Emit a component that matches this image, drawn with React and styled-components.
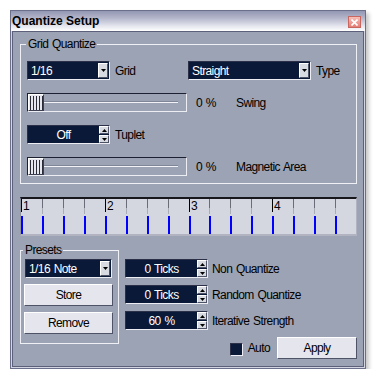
import React from 'react';
import styled, { createGlobalStyle } from 'styled-components';

const Global = createGlobalStyle`
  html, body { margin: 0; padding: 0; background: #ffffff; }
  body {
    font-family: "Liberation Sans", Arial, sans-serif;
    font-size: 12px;
    letter-spacing: -0.6px;
    word-spacing: 1px;
    color: #000;
  }
  * { box-sizing: border-box; }
`;

const Window = styled.div`
  margin: 10px 0 0 10px;
  width: 356px;
  border: 1px solid #6c6f8c;
  background: #d3d6e0;
  box-shadow: 3px 3px 4px rgba(0, 0, 0, 0.22);
`;

const TitleBar = styled.div`
  height: 20px;
  display: flex;
  align-items: center;
  justify-content: space-between;
  padding: 0 4px 0 1px;
  background: linear-gradient(to bottom, #9497b2 0%, #b3b5ca 35%, #e4e5ee 75%, #ffffff 100%);
`;

const Title = styled.span`
  font-family: "Liberation Sans", Arial, sans-serif;
  font-weight: bold;
  font-size: 12px;
  letter-spacing: 0;
  word-spacing: 0;
  color: #000;
`;

const CloseBox = styled.span`
  width: 13px;
  height: 12px;
  margin-top: 2px;
  display: flex;
  align-items: center;
  justify-content: center;
  border: 1px solid #c86660;
  background: linear-gradient(to bottom, #f6beb8, #e57d75);
`;

const Body = styled.div`
  margin: 0 1px 1px 1px;
  border: 1px solid #5d607a;
  background: #9ca3b4;
  padding: 5px 6px 7px 7px;
`;

const Group = styled.fieldset`
  margin: 0;
  min-width: 0;
  border: 1px solid #eef0f5;
  padding: ${p => p.$pad};
  width: ${p => p.$w}px;
`;

const Legend = styled.legend`
  padding: 0 2px;
  margin-left: -1px;
  line-height: 14px;
  font-size: 12px;
  color: #000;
`;

const Rows = styled.div`
  display: flex;
  flex-direction: column;
  gap: ${p => p.$gap}px;
`;

const Row = styled.div`
  display: flex;
  align-items: center;
  height: 19px;
`;

const Label = styled.span`
  margin-left: ${p => p.$ml ?? 5}px;
  width: ${p => (p.$w ? `${p.$w}px` : 'auto')};
  white-space: nowrap;
  color: #000;
`;

const Field = styled.div`
  display: flex;
  align-items: center;
  width: ${p => p.$w}px;
  height: 19px;
  margin-left: ${p => p.$ml ?? 0}px;
  background: #0a1938;
  border-top: 1px solid #2b3048;
  border-left: 1px solid #2b3048;
  border-right: 1px solid #eceef4;
  border-bottom: 1px solid #eceef4;
  color: #fff;
`;

const FieldText = styled.span`
  flex: 1;
  padding-left: ${p => (p.$center ? 0 : 3)}px;
  text-align: ${p => (p.$center ? 'center' : 'left')};
  white-space: nowrap;
`;

const DropButton = styled.span`
  width: 10px;
  height: 15px;
  margin-right: 1px;
  display: flex;
  align-items: center;
  justify-content: center;
  background: #d8dae2;
  border-top: 1px solid #ffffff;
  border-left: 1px solid #ffffff;
  border-right: 1px solid #4e5266;
  border-bottom: 1px solid #4e5266;
`;

const SpinButtons = styled.span`
  width: 10px;
  height: 17px;
  display: flex;
  flex-direction: column;
  gap: 1px;
`;

const SpinButton = styled.span`
  flex: 1;
  display: flex;
  align-items: center;
  justify-content: center;
  background: #d8dae2;
  border-top: 1px solid #ffffff;
  border-left: 1px solid #ffffff;
  border-right: 1px solid #4e5266;
  border-bottom: 1px solid #4e5266;
`;

const SliderBox = styled.div`
  display: flex;
  align-items: center;
  width: 160px;
  height: 19px;
  border-top: 1px solid #1d2030;
  border-left: 1px solid #1d2030;
  border-right: 1px solid #eceef4;
  border-bottom: 1px solid #eceef4;
`;

const Thumb = styled.span`
  width: 16px;
  height: 17px;
  display: flex;
  align-items: center;
  justify-content: center;
  background: #e6e7ee;
  border-top: 1px solid #ffffff;
  border-left: 1px solid #ffffff;
  border-right: 1px solid #3c3f52;
  border-bottom: 1px solid #3c3f52;
`;

const Grip = styled.span`
  width: 13px;
  height: 14px;
  background: repeating-linear-gradient(to right, #2a2c38 0 1px, transparent 1px 3px);
`;

const Track = styled.span`
  flex: 1;
  height: 1px;
  margin-right: 8px;
  background: #f2f3f7;
  box-shadow: 0 -1px 0 #7f8698;
`;

const Percent = styled.span`
  width: 40px;
  margin-left: 9px;
  white-space: nowrap;
`;

const Ruler = styled.div`
  margin-top: 13px;
  width: 337px;
  height: 39px;
  background: #d5d7e0;
  border-top: 2px solid #16161c;
  border-left: 1px solid #8f93a2;
  border-right: 1px solid #b1b4c0;
  border-bottom: 2px solid #b1b4c0;
  display: flex;
`;

const Bottom = styled.div`
  margin-top: 7px;
  display: flex;
  align-items: flex-start;
`;

const Button = styled.button`
  display: block;
  width: ${p => p.$w}px;
  height: 22px;
  margin: ${p => p.$m ?? '0'};
  padding: 0;
  font: inherit;
  letter-spacing: inherit;
  color: #000;
  background: #e5e6ed;
  border-style: solid;
  border-width: 1px;
  border-color: #ffffff #4f5367 #4f5367 #ffffff;
`;

const RightCol = styled.div`
  margin-left: 6px;
  padding-top: 16px;
  flex: 1;
  display: flex;
  flex-direction: column;
`;

const ApplyRow = styled.div`
  margin-top: 7px;
  display: flex;
  align-items: center;
  justify-content: flex-end;
`;

const Check = styled.span`
  width: 13px;
  height: 13px;
  margin-top: 2px;
  background: #0a1938;
  border-top: 1px solid #2b3048;
  border-left: 1px solid #2b3048;
  border-right: 1px solid #eceef4;
  border-bottom: 1px solid #eceef4;
`;

const Down = () => (
  <svg width="5" height="3" viewBox="0 0 5 3"><path d="M0 0H5L2.5 3Z" fill="#000" /></svg>
);
const Up = () => (
  <svg width="5" height="3" viewBox="0 0 5 3"><path d="M0 3H5L2.5 0Z" fill="#000" /></svg>
);

const Select = ({ w, children, ml }) => (
  <Field $w={w} $ml={ml}>
    <FieldText>{children}</FieldText>
    <DropButton><Down /></DropButton>
  </Field>
);

const Spin = ({ w, children }) => (
  <Field $w={w}>
    <FieldText $center>{children}</FieldText>
    <SpinButtons>
      <SpinButton><Up /></SpinButton>
      <SpinButton><Down /></SpinButton>
    </SpinButtons>
  </Field>
);

const Slider = () => (
  <SliderBox>
    <Thumb><Grip /></Thumb>
    <Track />
  </SliderBox>
);

const RulerDrawing = () => {
  const cols = Array.from({ length: 16 }, (_, i) => i);
  const step = 335 / 16;
  return (
    <svg width="335" height="35" viewBox="0 0 335 35">
      {cols.map(i => {
        const x = Math.round(i * step);
        const beat = i % 4 === 0;
        return (
          <g key={i}>
            {beat ? (
              <>
                <rect x={x} y={0} width={1} height={13} fill="#000" />
                <text x={x + 2} y={11} fontSize="12" fontFamily='"Liberation Sans", Arial, sans-serif' fill="#000">{i / 4 + 1}</text>
              </>
            ) : (
              <>
                <rect x={x} y={0} width={1} height={9} fill="#6a6c78" />
                <rect x={x} y={9} width={1} height={6} fill="#a9abb6" />
              </>
            )}
            <rect x={x} y={17} width={2} height={18} fill="#0000ff" />
          </g>
        );
      })}
    </svg>
  );
};

export default function App() {
  return (
    <>
      <Global />
      <Window>
        <TitleBar>
          <Title>Quantize Setup</Title>
          <CloseBox>
            <svg width="7" height="7" viewBox="0 0 7 7">
              <path d="M0.5 0.5L6.5 6.5M6.5 0.5L0.5 6.5" stroke="#fff" strokeWidth="1.6" />
            </svg>
          </CloseBox>
        </TitleBar>
        <Body>
          <Group $w={337} $pad="10px 6px 7px 6px">
            <Legend>Grid Quantize</Legend>
            <Rows $gap={13}>
              <Row>
                <Select w={83}>1/16</Select>
                <Label $w={73}>Grid</Label>
                <Select w={123}>Straight</Select>
                <Label>Type</Label>
              </Row>
              <Row>
                <Slider />
                <Percent>0 %</Percent>
                <Label $ml={0}>Swing</Label>
              </Row>
              <Row>
                <Spin w={83}>Off</Spin>
                <Label>Tuplet</Label>
              </Row>
              <Row>
                <Slider />
                <Percent>0 %</Percent>
                <Label $ml={0}>Magnetic Area</Label>
              </Row>
            </Rows>
          </Group>

          <Ruler>
            <RulerDrawing />
          </Ruler>

          <Bottom>
            <Group $w={99} $pad="2px 3px 9px 3px">
              <Legend>Presets</Legend>
              <Select w={87} ml={1}>1/16 Note</Select>
              <Button $w={89} $m="6px 0 0 0">Store</Button>
              <Button $w={89} $m="6px 0 0 0">Remove</Button>
            </Group>
            <RightCol>
              <Rows $gap={7}>
                <Row>
                  <Spin w={83}>0 Ticks</Spin>
                  <Label $ml={4}>Non Quantize</Label>
                </Row>
                <Row>
                  <Spin w={83}>0 Ticks</Spin>
                  <Label $ml={4}>Random Quantize</Label>
                </Row>
                <Row>
                  <Spin w={83}>60 %</Spin>
                  <Label $ml={4}>Iterative Strength</Label>
                </Row>
              </Rows>
              <ApplyRow>
                <Check />
                <Label $ml={5}>Auto</Label>
                <Button $w={80} $m="0 0 0 7px">Apply</Button>
              </ApplyRow>
            </RightCol>
          </Bottom>
        </Body>
      </Window>
    </>
  );
}
